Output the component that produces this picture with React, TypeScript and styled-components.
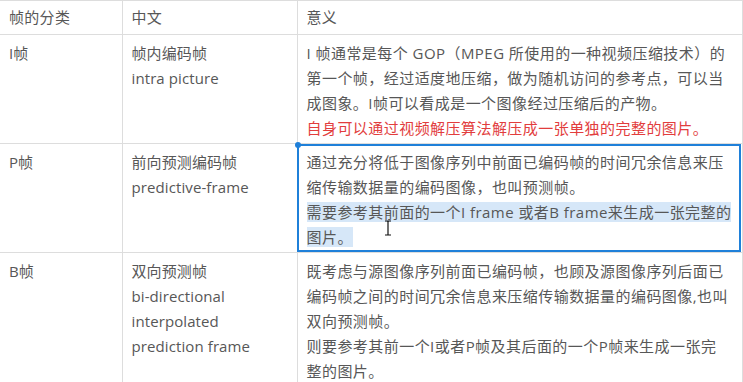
import { Fragment } from 'react';

import styled, { createGlobalStyle, css } from 'styled-components';

const GlobalStyle = createGlobalStyle`
    html,
    body {
        margin: 0;
        padding: 0;
        background: #ffffff;
    }

    body {
        font-family: 'Open Sans', 'Noto Sans CJK SC', sans-serif;
        color: #575757;
    }
`;

const Table = styled.table`
    width: 743px;
    border-collapse: collapse;
    table-layout: fixed;
    font-size: 15px;
    line-height: 25px;
`;

const HeadCell = styled.th`
    padding: 4px 10px 4px 9px;
    text-align: left;
    font-weight: 400;
    letter-spacing: 0.3px;
    border-top: 1px solid #dddddd;
    border-bottom: 1px solid #dddddd;
    border-right: 1px solid #dddddd;
`;

const Cell = styled.td<{ $selected?: boolean; $wide?: boolean }>`
    position: relative;
    vertical-align: top;
    padding: 6px 10px 2px 9px;
    white-space: nowrap;
    letter-spacing: ${({ $wide }) => ($wide ? '0.45px' : '0.1px')};
    border-bottom: 1px solid #dddddd;
    border-right: 1px solid #dddddd;

    ${({ $selected }) =>
        $selected &&
        css`
            /* focused cell frame sits over the grid lines */
            &::after {
                content: '';
                position: absolute;
                inset: 0 1px 0 -1px;
                border: 2px solid #1f80d9;
                pointer-events: none;
            }

            &::before {
                content: '';
                position: absolute;
                left: -3px;
                top: -2px;
                width: 6px;
                height: 6px;
                border-radius: 50%;
                background: #1f80d9;
                z-index: 1;
            }
        `}
`;

const Line = styled.div<{ $tone?: 'red' }>`
    color: ${({ $tone }) => ($tone === 'red' ? '#e23d3d' : 'inherit')};
`;

const Selected = styled.span`
    background: #d6e7f8;
`;

const Caret = styled.svg`
    position: absolute;
    left: 86px;
    top: 76px;
`;

type Row = {
    kind: string;
    names: string[];
    meaning: { text: string; tone?: 'red'; picked?: boolean }[];
    selected?: boolean;
};

const rows: Row[] = [
    {
        kind: 'I帧',
        names: ['帧内编码帧', 'intra picture'],
        meaning: [
            { text: 'I 帧通常是每个 GOP（MPEG 所使用的一种视频压缩技术）的' },
            { text: '第一个帧，经过适度地压缩，做为随机访问的参考点，可以当' },
            { text: '成图象。I帧可以看成是一个图像经过压缩后的产物。' },
            { text: '自身可以通过视频解压算法解压成一张单独的完整的图片。', tone: 'red' },
        ],
    },
    {
        kind: 'P帧',
        names: ['前向预测编码帧', 'predictive-frame'],
        meaning: [
            { text: '通过充分将低于图像序列中前面已编码帧的时间冗余信息来压' },
            { text: '缩传输数据量的编码图像，也叫预测帧。' },
            { text: '需要参考其前面的一个I frame 或者B frame来生成一张完整的 ', picked: true },
            { text: '图片。', picked: true },
        ],
        selected: true,
    },
    {
        kind: 'B帧',
        names: ['双向预测帧', 'bi-directional', 'interpolated', 'prediction frame'],
        meaning: [
            { text: '既考虑与源图像序列前面已编码帧，也顾及源图像序列后面已' },
            { text: '编码帧之间的时间冗余信息来压缩传输数据量的编码图像,也叫' },
            { text: '双向预测帧。' },
            { text: '则要参考其前一个I或者P帧及其后面的一个P帧来生成一张完' },
            { text: '整的图片。' },
        ],
    },
];

const App = () => (
    <>
        <GlobalStyle />
        <Table>
            <colgroup>
                <col style={{ width: 122 }} />
                <col style={{ width: 175 }} />
                <col />
            </colgroup>
            <thead>
                <tr>
                    <HeadCell>帧的分类</HeadCell>
                    <HeadCell>中文</HeadCell>
                    <HeadCell>意义</HeadCell>
                </tr>
            </thead>
            <tbody>
                {rows.map(row => (
                    <tr key={row.kind}>
                        <Cell>{row.kind}</Cell>
                        <Cell>
                            {row.names.map(name => (
                                <Line key={name}>{name}</Line>
                            ))}
                        </Cell>
                        <Cell $wide $selected={row.selected}>
                            {row.meaning.map(({ text, tone, picked }) => (
                                <Line key={text} $tone={tone}>
                                    {picked ? <Selected>{text}</Selected> : <Fragment>{text}</Fragment>}
                                </Line>
                            ))}
                            {row.selected && (
                                <Caret width="8" height="16" viewBox="0 0 8 16">
                                    <path
                                        d="M1 1h2.5L4 1.6 4.5 1H7M4 1.6v12.8M1 15h2.5l.5-.6.5.6H7"
                                        fill="none"
                                        stroke="#111"
                                        strokeWidth="1.2"
                                    />
                                </Caret>
                            )}
                        </Cell>
                    </tr>
                ))}
            </tbody>
        </Table>
    </>
);

export default App;
